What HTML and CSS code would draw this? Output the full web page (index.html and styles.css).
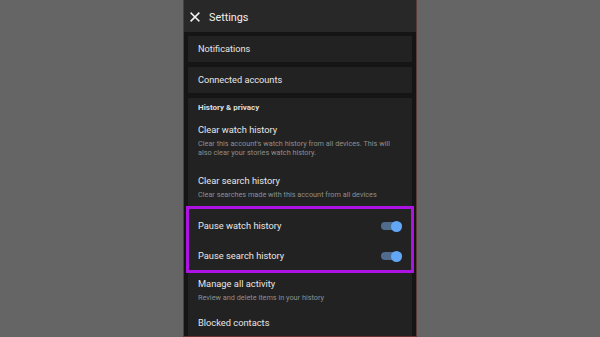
FILE: index.html
```html
<!DOCTYPE html>
<html>
<head>
<meta charset="utf-8">
<link rel="stylesheet" href="styles.css">
</head>
<body>
<div class="phone">
  <header class="topbar">
    <svg class="close" width="10" height="10" viewBox="0 0 10 10"><path d="M1.2 1.2 L8.8 8.8 M8.8 1.2 L1.2 8.8" stroke="#f2f2f2" stroke-width="1.6" stroke-linecap="square"/></svg>
    <span class="title">Settings</span>
  </header>
  <main class="content">
    <div class="card single">Notifications</div>
    <div class="card single">Connected accounts</div>
    <div class="card group">
      <div class="section">History &amp; privacy</div>
      <div class="item first">
        <div class="item-title">Clear watch history</div>
        <div class="item-desc">Clear this account's watch history from all devices. This will also clear your stories watch history.</div>
      </div>
      <div class="item gap">
        <div class="item-title">Clear search history</div>
        <div class="item-desc">Clear searches made with this account from all devices</div>
      </div>
      <div class="highlight">
        <div class="toggle-row">
          <span class="item-title">Pause watch history</span>
          <span class="switch"><span class="thumb"></span></span>
        </div>
        <div class="toggle-row second">
          <span class="item-title">Pause search history</span>
          <span class="switch"><span class="thumb"></span></span>
        </div>
      </div>
      <div class="item manage">
        <div class="item-title">Manage all activity</div>
        <div class="item-desc">Review and delete items in your history</div>
      </div>
      <div class="item blocked">
        <div class="item-title">Blocked contacts</div>
      </div>
    </div>
  </main>
</div>
</body>
</html>
```
FILE: styles.css
```css
html, body {
  margin: 0;
  padding: 0;
  height: 337px;
  overflow: hidden;
}
body {
  background: #656565;
  display: flex;
  justify-content: center;
  font-family: Roboto, "Noto Sans", sans-serif;
}
.phone {
  width: 232px;
  height: 336px;
  background: #151515;
  border-left: 1px solid #5c3a3a;
  border-right: 1px solid #5c3a3a;
  border-bottom: 1px solid #6a3434;
  display: flex;
  flex-direction: column;
  overflow: hidden;
}
.topbar {
  height: 32px;
  background: #282828;
  display: flex;
  align-items: center;
  padding-left: 6px;
  flex-shrink: 0;
}
.close {
  display: block;
  margin-top: 2px;
}
.title {
  color: #f0f0f0;
  font-size: 10.8px;
  margin-left: 9px;
  margin-top: 2px;
}
.content {
  padding: 4px 4px 0 4px;
  display: flex;
  flex-direction: column;
  gap: 5px;
}
.card {
  background: #222222;
  color: #e6e6e6;
}
.single {
  height: 26px;
  line-height: 26px;
  padding-left: 10px;
  font-size: 9.2px;
}
.group {
  padding: 4px 10px 0 10px;
  height: 300px;
}
.section {
  font-size: 8px;
  font-weight: bold;
  line-height: 12px;
  color: #dedede;
}
.item-title {
  font-size: 9.3px;
  line-height: 14px;
  color: #e6e6e6;
}
.item-desc {
  font-size: 7.3px;
  line-height: 9px;
  color: #8e8e8e;
  margin-top: 2px;
  padding-right: 10px;
}
.item.first { margin-top: 9px; }
.item.gap { margin-top: 17px; }
.highlight {
  margin: 7px -12px 0 -12px;
  border: 3px solid #ad14e3;
  padding: 10px 9px 7px 9px;
}
.toggle-row {
  display: flex;
  align-items: center;
  justify-content: space-between;
  height: 14px;
}
.toggle-row.second { margin-top: 16px; }
.switch {
  position: relative;
  width: 21px;
  height: 8px;
  border-radius: 4px;
  background: #4f6b8e;
}
.thumb {
  position: absolute;
  right: 0;
  top: -1.5px;
  width: 11px;
  height: 11px;
  border-radius: 50%;
  background: #62a6f6;
}
.item.manage { margin-top: 4px; }
.item.blocked { margin-top: 14px; }
```
